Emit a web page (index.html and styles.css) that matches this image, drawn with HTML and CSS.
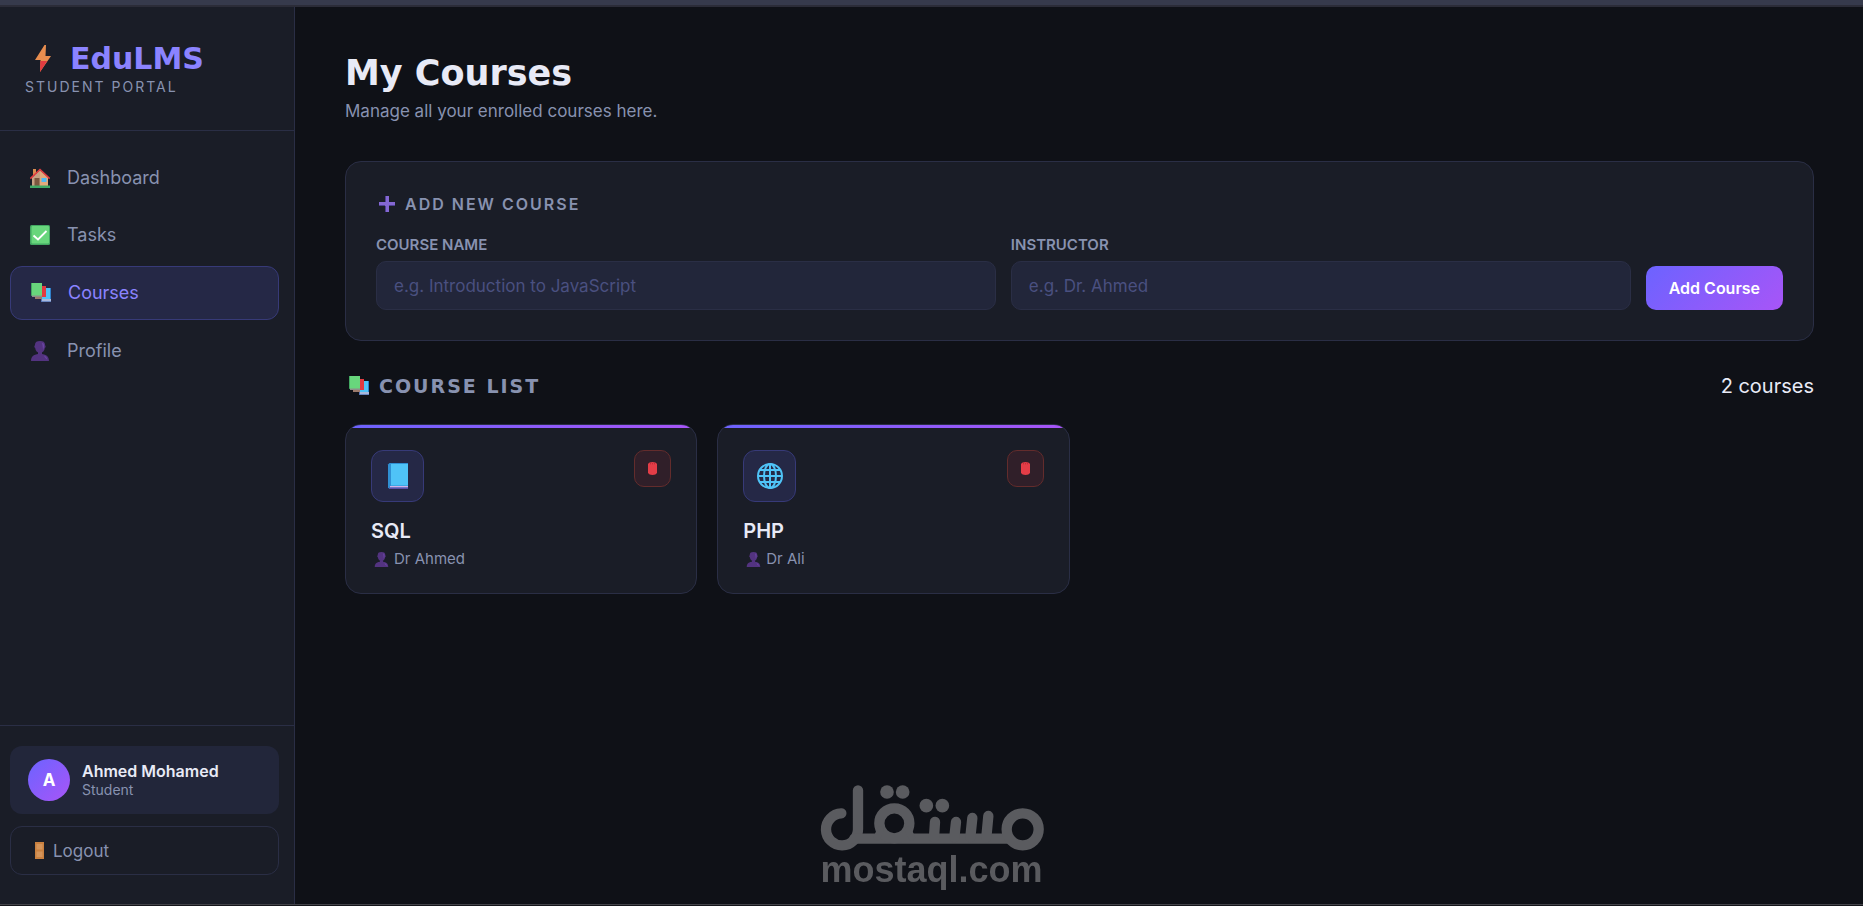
FILE: index.html
```html
<!DOCTYPE html>
<html lang="en">
  <head>
    <title>My Courses - EduLMS</title>
    <meta charset="utf-8" />
    <meta name="viewport" content="width=device-width, initial-scale=1" />

    <link rel="stylesheet" href="styles.css">
  </head>

  <body>
    <!-- shared icons -->
    <svg class="sprite" aria-hidden="true">
      <symbol id="icon-books" viewBox="0 0 20 20">
        <path fill="#9b7a6c" d="M4 12h8v4H4z" />
        <path fill="#4fc3f7" d="M11 5h9v11h-9z" />
        <path fill="#2f7fc9" d="M19 5h1v11h-1z" />
        <path fill="#a9b8dc" d="M10 16h10v3H10z" />
        <path fill="#5577b8" d="M10 16h1v3h-1zM10 18.300h10v.7H10z" />
        <path fill="#e23b41" d="M9 3h6v11H9z" />
        <path fill="#8d8f8a" d="M1 12h10v2H1z" />
        <path fill="#68d67c" d="M0 0h11v12.500H0z" />
        <path fill="#43a862" d="M0 0h1v12.500H0z" />
      </symbol>
      <symbol id="icon-user" viewBox="0 0 20 20">
        <path fill="#533380" d="M5 3.500C5 1 7 0 10 0s5 1 5 3.500v.8c1 .4.800 2.600-.2 2.800-.3 2.900-2 4.900-4.800 4.900s-4.500-2-4.800-4.900c-1-.2-1.200-2.400-.2-2.800z" />
        <path fill="#533380" d="M8 11h4v3H8zM1 20c0-4.500 2.800-7 9-7s9 2.500 9 7z" />
        <path fill="#6b46a3" d="M12 2c2 0 2 1.500 2 3.500l-.8 3.500c-.6-2.500-.2-4-1.200-7zM14 14.500c2 .7 3 2 3.300 4-1.300-.5-2.500-2-3.300-4z" />
      </symbol>
      <symbol id="icon-trash" viewBox="0 0 9 13">
        <path fill="#e33d47" d="M0 2C.5.800 2.300 0 4.500 0S8.500.800 9 2v8.500C8.500 12.300 6.500 13 4.500 13S.5 12.300 0 10.500z" />
        <path fill="#b92735" d="M2 1.300h1v1H2zM4 1.300h1v1H4zM6 1.300h1v1H6z" />
      </symbol>
    </svg>

    <div class="app">
      <aside class="sidebar">
        <div class="brand">
          <div class="logo">
            <svg class="logo-icon" viewBox="0 0 16 27" aria-hidden="true">
              <path fill="#e88d4f" d="M9.500 0 0 15h5.500L5 27 16 11h-5.500L11 0z" />
              <path fill="#e23b41" d="M5.400 16h6.800L5 27z" />
            </svg>
            <span>EduLMS</span>
          </div>
          <div class="portal">Student Portal</div>
        </div>

        <nav class="nav">
          <a class="nav-item" href="#dashboard">
            <svg viewBox="0 0 20 20" aria-hidden="true">
              <path fill="#d98c50" d="M3 1h3v6H3z" />
              <path fill="#c6a183" d="M2 9.500 10 2l8 7.500V18H2z" />
              <path fill="#e3aa7c" d="M10 3l8 6.500V18h-8z" />
              <path fill="none" stroke="#e23b41" stroke-width="1.600" d="M.3 10.600 10 1.500l9.700 9.100" />
              <path fill="#7b573f" d="M4.500 10h5v8h-5z" />
              <path fill="#4fb8f2" d="M11.500 10h5v4h-5z" />
              <path fill="#40a866" d="M0 17.500h20V20H0z" />
            </svg>
            Dashboard
          </a>
          <a class="nav-item" href="#tasks">
            <svg viewBox="0 0 20 20" aria-hidden="true">
              <rect width="20" height="20" rx="1.500" fill="#43a862" />
              <rect x="1.500" y="1" width="17.500" height="17.500" rx="1" fill="#68d67c" />
              <path fill="none" stroke="#fff" stroke-width="1.800" d="M3.500 10.500 8 14.500 16.500 6" />
            </svg>
            Tasks
          </a>
          <a class="nav-item active" href="#courses">
            <svg><use href="#icon-books" /></svg>
            Courses
          </a>
          <a class="nav-item" href="#profile">
            <svg><use href="#icon-user" /></svg>
            Profile
          </a>
        </nav>

        <div class="sidebar-footer">
          <div class="user">
            <div class="avatar">A</div>
            <div>
              <div class="user-name">Ahmed Mohamed</div>
              <div class="user-role">Student</div>
            </div>
          </div>
          <button class="logout" type="button">
            <svg viewBox="0 0 9 17" aria-hidden="true">
              <path fill="#c9803f" d="M0 0h9v17H0z" />
              <path fill="#d4945a" d="M1.500 2h6v5.500h-6zM1.500 9.500h6V15h-6z" />
            </svg>
            Logout
          </button>
        </div>
      </aside>

      <main class="main">
        <h1>My Courses</h1>
        <p class="subtitle">Manage all your enrolled courses here.</p>

        <section class="panel">
          <h2 class="panel-title">
            <svg viewBox="0 0 16 16" aria-hidden="true">
              <path fill="#8467d3" d="M6 0h4v6h6v4h-6v6H6v-6H0V6h6z" />
              <path fill="#4f4091" d="M6 0h1v6H6zM6 10h1v6H6zM0 9h6v1H0zM10 9h6v1h-6z" />
            </svg>
            Add New Course
          </h2>
          <form class="form-row">
            <div class="field">
              <label for="courseName">Course Name</label>
              <input type="text" id="courseName" placeholder="e.g. Introduction to JavaScript" />
            </div>
            <div class="field">
              <label for="instructor">Instructor</label>
              <input type="text" id="instructor" placeholder="e.g. Dr. Ahmed" />
            </div>
            <button class="btn-add" type="button">Add Course</button>
          </form>
        </section>

        <div class="list-header">
          <h2 class="list-title">
            <svg><use href="#icon-books" /></svg>
            Course List
          </h2>
          <span class="count">2 courses</span>
        </div>

        <div class="courses">
          <article class="card">
            <div class="card-top">
              <div class="card-icon">
                <svg viewBox="0 0 26 26" aria-hidden="true">
                  <path fill="#2f8fd3" d="M3 1.500 4.500 0H23v26H4.500L3 24.500z" />
                  <path fill="#4fc3f7" d="M6 1h17v21.500H6z" />
                  <path fill="#d3b3e8" d="M5 23h18v1.500H5z" />
                  <path fill="#5b50a8" d="M4 24.500h19V26H4.500z" />
                </svg>
              </div>
              <button class="btn-delete" type="button" aria-label="Delete SQL">
                <svg><use href="#icon-trash" /></svg>
              </button>
            </div>
            <h3>SQL</h3>
            <p class="teacher">
              <svg><use href="#icon-user" /></svg>
              Dr Ahmed
            </p>
          </article>

          <article class="card">
            <div class="card-top">
              <div class="card-icon">
                <svg viewBox="0 0 26 26" fill="none" stroke="#4fc3f7" stroke-width="2" aria-hidden="true">
                  <circle cx="13" cy="13" r="12" />
                  <ellipse cx="13" cy="13" rx="6" ry="12" />
                  <path d="M13 1v24M1 13h24M3 7h20M3 19h20" />
                </svg>
              </div>
              <button class="btn-delete" type="button" aria-label="Delete PHP">
                <svg><use href="#icon-trash" /></svg>
              </button>
            </div>
            <h3>PHP</h3>
            <p class="teacher">
              <svg><use href="#icon-user" /></svg>
              Dr Ali
            </p>
          </article>
        </div>
      </main>
    </div>

    <div class="watermark">
      <svg viewBox="87 45 672 198" fill="none" stroke="currentColor" stroke-width="31" stroke-linecap="round" aria-hidden="true">
        <path d="M151 130a48 48 0 1 0 50 48V61" />
        <path d="M190 206H650" />
        <circle cx="310" cy="160" r="45" />
        <path d="M268 180l-10 22M352 180l10 22" stroke-width="20" />
        <circle cx="695" cy="178" r="48" />
        <path d="M432 156l-3 46M495 156l-5 46M544 144l-6 58M592 138l-6 64" />
        <g fill="currentColor" stroke="none">
          <circle cx="288" cy="66" r="20.500" />
          <circle cx="335" cy="66" r="20.500" />
          <circle cx="406" cy="107" r="20.500" />
          <circle cx="454" cy="107" r="20.500" />
        </g>
      </svg>
      <span>mostaql.com</span>
    </div>
  </body>
</html>
```
FILE: styles.css
```css
:root {
  --bg: #0f1117;
  --surface: #1a1d27;
  --surface2: #22263a;
  --border: #2a2e45;
  --accent: #6c63ff;
  --accent-light: #8b83ff;
  --gradient: linear-gradient(135deg, #6c63ff, #a855f7);
  --text: #e8eaf6;
  --muted: #8892b0;
  --font: Inter, "Open Sans", sans-serif;
  --display: "DejaVu Sans", sans-serif;
}

* {
  box-sizing: border-box;
  margin: 0;
  padding: 0;
}

body {
  display: flex;
  flex-direction: column;
  min-height: 100vh;
  border-top: 5px solid #363a4c;
  border-bottom: 1px solid #15161b;
  background: var(--bg);
  color: var(--text);
  font-family: var(--font);
  font-size: 20px;
}

input,
button {
  font-family: inherit;
}

.sprite {
  position: absolute;
  width: 0;
  height: 0;
}

.app {
  display: flex;
  flex: 1;
  border-top: 2px solid #2b2c38;
  border-bottom: 1px solid #434349;
}

/* sidebar */
.sidebar {
  display: flex;
  flex-direction: column;
  width: 295px;
  background: var(--surface);
  border-right: 1px solid var(--border);
}

.brand {
  padding: 33px 25px 32px;
  border-bottom: 1px solid var(--border);
}

.logo {
  display: flex;
  align-items: center;
  gap: 19px;
  padding-left: 10px;
  height: 36px;
  font-family: var(--display);
  font-size: 30px;
  font-weight: 700;
  color: var(--accent-light);
}

.logo-icon {
  width: 16px;
  height: 27px;
}

.portal {
  line-height: 22px;
  font-size: 14px;
  letter-spacing: 2px;
  text-transform: uppercase;
  color: var(--muted);
}

.nav {
  display: flex;
  flex: 1;
  flex-direction: column;
  gap: 5px;
  padding: 21px 15px 21px 10px;
}

.nav-item {
  display: flex;
  align-items: center;
  gap: 17px;
  padding: 14px 20px;
  line-height: 24px;
  border-radius: 12px;
  color: var(--muted);
  font-size: 18px;
  text-decoration: none;
}

.nav-item svg {
  width: 20px;
  height: 20px;
}

.nav-item.active {
  background: #252846;
  border: 1px solid #373a78;
  color: var(--accent-light);
}

.sidebar-footer {
  padding: 20px 15px 29px 10px;
  border-top: 1px solid var(--border);
}

.user {
  display: flex;
  align-items: center;
  gap: 12px;
  padding: 13px 18px;
  margin-bottom: 12px;
  border-radius: 12px;
  background: var(--surface2);
}

.avatar {
  display: flex;
  align-items: center;
  justify-content: center;
  width: 42px;
  height: 42px;
  border-radius: 50%;
  background: var(--gradient);
  color: #fff;
  font-size: 17px;
  font-weight: 700;
}

.user-name {
  line-height: 20px;
  font-size: 16px;
  font-weight: 600;
}

.user-role {
  line-height: 18px;
  font-size: 14px;
  color: var(--muted);
}

.logout {
  display: flex;
  align-items: center;
  gap: 9px;
  width: 100%;
  height: 49px;
  padding: 0 24px;
  border: 1px solid var(--border);
  border-radius: 12px;
  background: none;
  color: var(--muted);
  font-size: 17px;
}

.logout svg {
  width: 9px;
  height: 17px;
}

/* main */
.main {
  flex: 1;
  padding: 44px 49px 44px 50px;
}

h1 {
  line-height: 44px;
  font-family: var(--display);
  font-size: 35px;
  font-weight: 700;
}

.subtitle {
  margin: 4px 0 37px;
  line-height: 25px;
  font-size: 17px;
  color: var(--muted);
}

.panel {
  padding: 30px;
  border: 1px solid var(--border);
  border-radius: 16px;
  background: var(--surface);
}

.panel-title {
  display: flex;
  align-items: center;
  gap: 10px;
  padding-left: 3px;
  margin-bottom: 19px;
  line-height: 24px;
  font-size: 16px;
  font-weight: 600;
  letter-spacing: 2px;
  text-transform: uppercase;
  color: var(--muted);
}

.panel-title svg {
  width: 16px;
  height: 16px;
}

.form-row {
  display: flex;
  align-items: flex-end;
  gap: 15px;
}

.field {
  display: flex;
  flex: 1;
  flex-direction: column;
  gap: 6px;
}

.field label {
  line-height: 20px;
  font-size: 15px;
  font-weight: 600;
  text-transform: uppercase;
  color: var(--muted);
}

.field input {
  width: 100%;
  height: 49px;
  padding: 0 17px;
  border: 1px solid var(--border);
  border-radius: 10px;
  background: var(--surface2);
  color: var(--text);
  font-size: 17px;
  outline: none;
}

.field input:focus {
  border-color: var(--accent);
}

.field input::placeholder {
  color: #4a5080;
}

.btn-add {
  height: 44px;
  padding: 0 23px;
  border: none;
  border-radius: 10px;
  background: var(--gradient);
  color: #fff;
  font-size: 16px;
  font-weight: 600;
}

.list-header {
  display: flex;
  align-items: center;
  justify-content: space-between;
  margin: 31px 0 24px;
  line-height: 28px;
}

.list-title {
  display: flex;
  align-items: center;
  gap: 10px;
  padding-left: 4px;
  font-family: var(--display);
  font-size: 19px;
  font-weight: 700;
  letter-spacing: 2px;
  text-transform: uppercase;
  color: var(--muted);
}

.list-title svg {
  width: 20px;
  height: 20px;
}

.courses {
  display: grid;
  grid-template-columns: repeat(auto-fill, minmax(340px, 1fr));
  gap: 20px;
}

.card {
  position: relative;
  overflow: hidden;
  padding: 25px 25px 24px;
  border: 1px solid var(--border);
  border-radius: 16px;
  background: var(--surface);
}

.card::before {
  content: "";
  position: absolute;
  top: 0;
  left: 0;
  right: 0;
  height: 3px;
  background: linear-gradient(90deg, #6c63ff, #a855f7);
}

.card-top {
  display: flex;
  align-items: flex-start;
  justify-content: space-between;
  margin-bottom: 16px;
}

.card-icon {
  display: flex;
  align-items: center;
  justify-content: center;
  width: 53px;
  height: 52px;
  border: 1px solid #373a78;
  border-radius: 12px;
  background: #252846;
}

.card-icon svg {
  width: 26px;
  height: 26px;
}

.btn-delete {
  display: flex;
  align-items: center;
  justify-content: center;
  width: 37px;
  height: 37px;
  border: 1px solid #632c2c;
  border-radius: 10px;
  background: #301f29;
}

.btn-delete svg {
  width: 9px;
  height: 13px;
}

.card h3 {
  line-height: 26px;
  font-size: 20px;
  font-weight: 600;
}

.teacher {
  display: flex;
  align-items: center;
  gap: 5px;
  padding-left: 3px;
  margin-top: 5px;
  line-height: 20px;
  font-size: 15px;
  color: var(--muted);
}

.teacher svg {
  width: 15px;
  height: 15px;
}

/* watermark over the page */
.watermark {
  position: fixed;
  left: 0;
  right: 0;
  bottom: 18px;
  display: flex;
  flex-direction: column;
  align-items: center;
  color: #5a5b5f;
  font-family: "Liberation Sans", Arial, sans-serif;
  font-size: 36px;
  font-weight: 700;
  line-height: 37px;
  pointer-events: none;
}

.watermark svg {
  width: 224px;
  height: 66px;
}
```
